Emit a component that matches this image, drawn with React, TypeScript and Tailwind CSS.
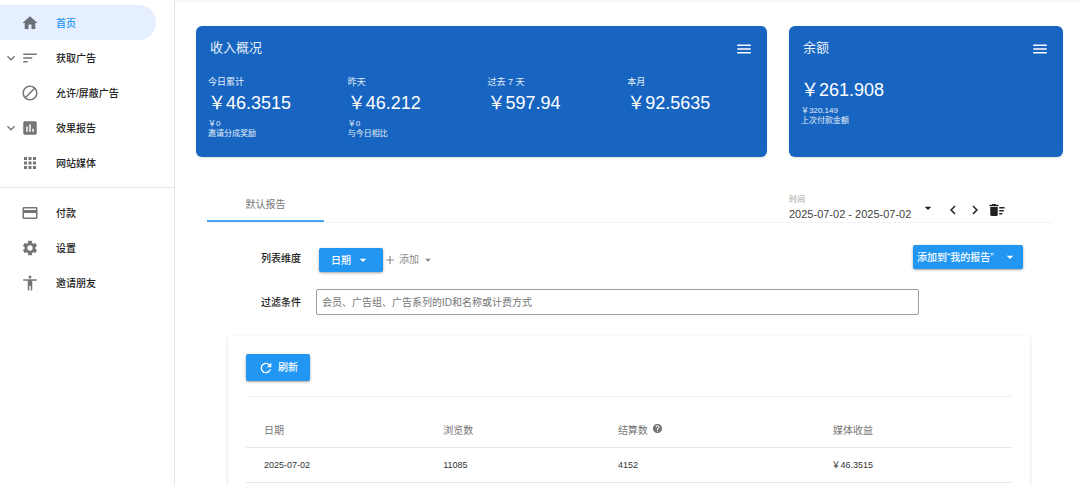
import type { ReactNode } from "react";
import type { IconType } from "react-icons";
import {
	MdAccessibility,
	MdAdd,
	MdApps,
	MdArrowDropDown,
	MdAssessment,
	MdBlock,
	MdChevronLeft,
	MdChevronRight,
	MdCreditCard,
	MdDeleteSweep,
	MdExpandMore,
	MdHelp,
	MdHome,
	MdMenu,
	MdRefresh,
	MdSettings,
	MdSort,
} from "react-icons/md";

interface NavEntry {
	label: string;
	icon: IconType;
	active?: boolean;
	expandable?: boolean;
}

interface Stat {
	label?: string;
	value: string;
	sub?: string;
	note?: string;
}

const mainNav: NavEntry[] = [
	{ label: "首页", icon: MdHome, active: true },
	{ label: "获取广告", icon: MdSort, expandable: true },
	{ label: "允许/屏蔽广告", icon: MdBlock },
	{ label: "效果报告", icon: MdAssessment, expandable: true },
	{ label: "网站媒体", icon: MdApps },
];

const accountNav: NavEntry[] = [
	{ label: "付款", icon: MdCreditCard },
	{ label: "设置", icon: MdSettings },
	{ label: "邀请朋友", icon: MdAccessibility },
];

const income: Stat[] = [
	{ label: "今日累计", value: "￥46.3515", sub: "￥0", note: "邀请分成奖励" },
	{ label: "昨天", value: "￥46.212", sub: "￥0", note: "与今日相比" },
	{ label: "过去 7 天", value: "￥597.94" },
	{ label: "本月", value: "￥92.5635" },
];

const rows = [{ date: "2025-07-02", views: "11085", settled: "4152", revenue: "￥46.3515" }];

function NavItem({ label, icon: Icon, active, expandable }: NavEntry) {
	return (
		<li>
			<a
				href="#"
				className={
					active
						? "flex items-center h-[35px] mr-[18px] pl-[3px] pt-px rounded-r-full bg-[#e6efff] text-[#2196f3]"
						: "flex items-center h-[35px] mr-[18px] pl-[3px] pt-px rounded-r-full text-[#212121]"
				}
			>
				<span className="w-[18px] shrink-0 text-[#757575]">{expandable && <MdExpandMore className="w-4 h-4" />}</span>
				<Icon className={active ? "w-[18px] h-[18px] text-[#6b6f78]" : "w-[18px] h-[18px] text-[#757575]"} />
				<span className="ml-[17px] text-[10px] font-medium">{label}</span>
			</a>
		</li>
	);
}

function SummaryCard({ title, children }: { title: string; children: ReactNode }) {
	return (
		<section className="rounded-md bg-[#1765c1] text-white/90 pt-3 pb-[18px] pl-3 shadow">
			<header className="flex items-center justify-between h-5 pl-[2px] pr-[14px]">
				<h2 className="text-[13px] leading-5">{title}</h2>
				<button type="button" aria-label={`${title}菜单`} className="mt-[2px] text-white">
					<MdMenu className="w-[18px] h-[18px]" />
				</button>
			</header>
			{children}
		</section>
	);
}

function StatBlock({ label, value, sub, note }: Stat) {
	return (
		<div>
			{label && <p className="text-[9px] leading-3 mb-[3px]">{label}</p>}
			<p className="text-[18px] leading-6 text-white">{value}</p>
			{sub && <p className="mt-1 text-[8px] leading-[10px]">{sub}</p>}
			{note && <p className="text-[8px] leading-[10px]">{note}</p>}
		</div>
	);
}

export default function App() {
	const blueBtn = "flex items-center rounded-xs bg-[#2196f3] text-white text-[10px] font-medium shadow-sm shadow-black/30";
	const cell = "pl-[18px] text-left font-normal";

	return (
		<div className="flex min-h-screen bg-white text-[#212121] font-['Liberation_Sans','Noto_Sans_CJK_SC',sans-serif]">
			<nav className="w-[175px] shrink-0 border-r border-[#e6e6e6] pt-[5px]">
				<ul className="pb-[7px] border-b border-[#e6e6e6]">
					{mainNav.map((n) => <NavItem key={n.label} {...n} />)}
				</ul>
				<ul className="pt-[7px]">
					{accountNav.map((n) => <NavItem key={n.label} {...n} />)}
				</ul>
			</nav>

			<main className="flex flex-col flex-1 min-w-0">
				<div className="h-[2px] bg-[#f7f7f7]" />

				<div className="grid grid-cols-[571fr_274fr] gap-[22px] pt-6 pl-[21px] pr-[17px]">
					<SummaryCard title="收入概况">
						<div className="grid grid-cols-4 mt-[18px]">
							{income.map((s) => <StatBlock key={s.label} {...s} />)}
						</div>
					</SummaryCard>
					<SummaryCard title="余额">
						<div className="mt-5">
							<StatBlock value="￥261.908" sub="￥320.149" note="上次付款金额" />
						</div>
					</SummaryCard>
				</div>

				<div className="flex flex-col flex-1 pl-8 pr-7 pt-[30px]">
					{/* Tab bar with the date range */}
					<div className="flex items-stretch h-9 border-b border-[#f3f3f3]">
						<button type="button" className="w-[117px] pt-[2px] border-b-2 border-[#42a5f5] text-[10px] text-[#757575]">默认报告</button>
						<div className="flex items-end ml-auto pr-[46px]">
							<button type="button" aria-haspopup="dialog" className="flex items-center text-left">
								<span className="block w-[131px]">
									<span className="block text-[8px] leading-3 text-[#9e9e9e]">时间</span>
									<span className="block text-[11px] leading-4 text-[#424242] whitespace-nowrap">2025-07-02 - 2025-07-02</span>
								</span>
								<MdArrowDropDown className="w-4 h-4" />
							</button>
							<div className="flex items-center gap-1 ml-2 mb-[3px]">
								<button type="button" aria-label="上一个时段"><MdChevronLeft className="w-[18px] h-[18px]" /></button>
								<button type="button" aria-label="下一个时段"><MdChevronRight className="w-[18px] h-[18px]" /></button>
								<button type="button" aria-label="清除"><MdDeleteSweep className="w-[18px] h-[18px]" /></button>
							</div>
						</div>
					</div>

					<div className="flex items-center mt-[22px] pl-[54px] pr-[29px]">
						<span className="w-[58px] text-[10px] font-medium">列表维度</span>
						<button type="button" className={`${blueBtn} h-6 pl-3 pr-3 gap-1 mt-[3px]`}>
							日期
							<MdArrowDropDown className="w-4 h-4" />
						</button>
						<button type="button" className="flex items-center mt-[2px] text-[10px] text-[#8a8a8a]">
							<MdAdd className="w-[14px] h-[14px] mr-[2px]" />
							添加
							<MdArrowDropDown className="w-[14px] h-[14px] ml-[2px]" />
						</button>
						<button type="button" className={`${blueBtn} self-start justify-between h-6 w-[110px] pl-1 pr-[5px] ml-auto`}>
							添加到“我的报告”
							<MdArrowDropDown className="w-4 h-4" />
						</button>
					</div>

					<div className="flex items-center mt-[17px] pl-[54px] pr-[133px]">
						<label htmlFor="filter" className="w-[55px] text-[10px] font-medium">过滤条件</label>
						<input
							id="filter"
							type="text"
							placeholder="会员、广告组、广告系列的ID和名称或计费方式"
							className="flex-1 min-w-0 h-[26px] px-[5px] rounded-xs border border-[#9e9e9e] text-[10px] placeholder:text-[#757575]"
						/>
					</div>

					<section className="flex-1 mt-[21px] ml-[21px] mr-[22px] px-[18px] pt-[18px] rounded-xs shadow-[0_1px_3px_rgba(0,0,0,0.18)]">
						<button type="button" className={`${blueBtn} h-[27px] pl-3 pr-3 gap-1`}>
							<MdRefresh className="w-4 h-4" />
							刷新
						</button>

						<table className="w-full mt-[15px] border-t border-[#f0f0f0] table-fixed">
							<thead className="text-[10px] text-[#757575]">
								<tr className="h-[51px] border-b border-[#e8e8e8]">
									<th className={`${cell} w-[23.4%] pt-4`}>日期</th>
									<th className={`${cell} w-[22.8%] pt-4`}>浏览数</th>
									<th className={`${cell} pt-4`}>
										<span className="flex items-start">
											结算数
											<MdHelp className="w-[11px] h-[11px] ml-1" />
										</span>
									</th>
									<th className="pt-4 pr-[139px] text-right font-normal whitespace-nowrap">媒体收益</th>
								</tr>
							</thead>
							<tbody className="text-[9px] text-[#333]">
								{rows.map((r) => (
									<tr key={r.date} className="h-[35px] border-b border-[#e8e8e8]">
										<td className={`${cell} pt-[2px]`}>{r.date}</td>
										<td className={`${cell} pt-[2px]`}>{r.views}</td>
										<td className={`${cell} pt-[2px]`}>{r.settled}</td>
										<td className="pt-[2px] pr-[139px] text-right whitespace-nowrap">{r.revenue}</td>
									</tr>
								))}
							</tbody>
						</table>
					</section>
				</div>
			</main>
		</div>
	);
}
